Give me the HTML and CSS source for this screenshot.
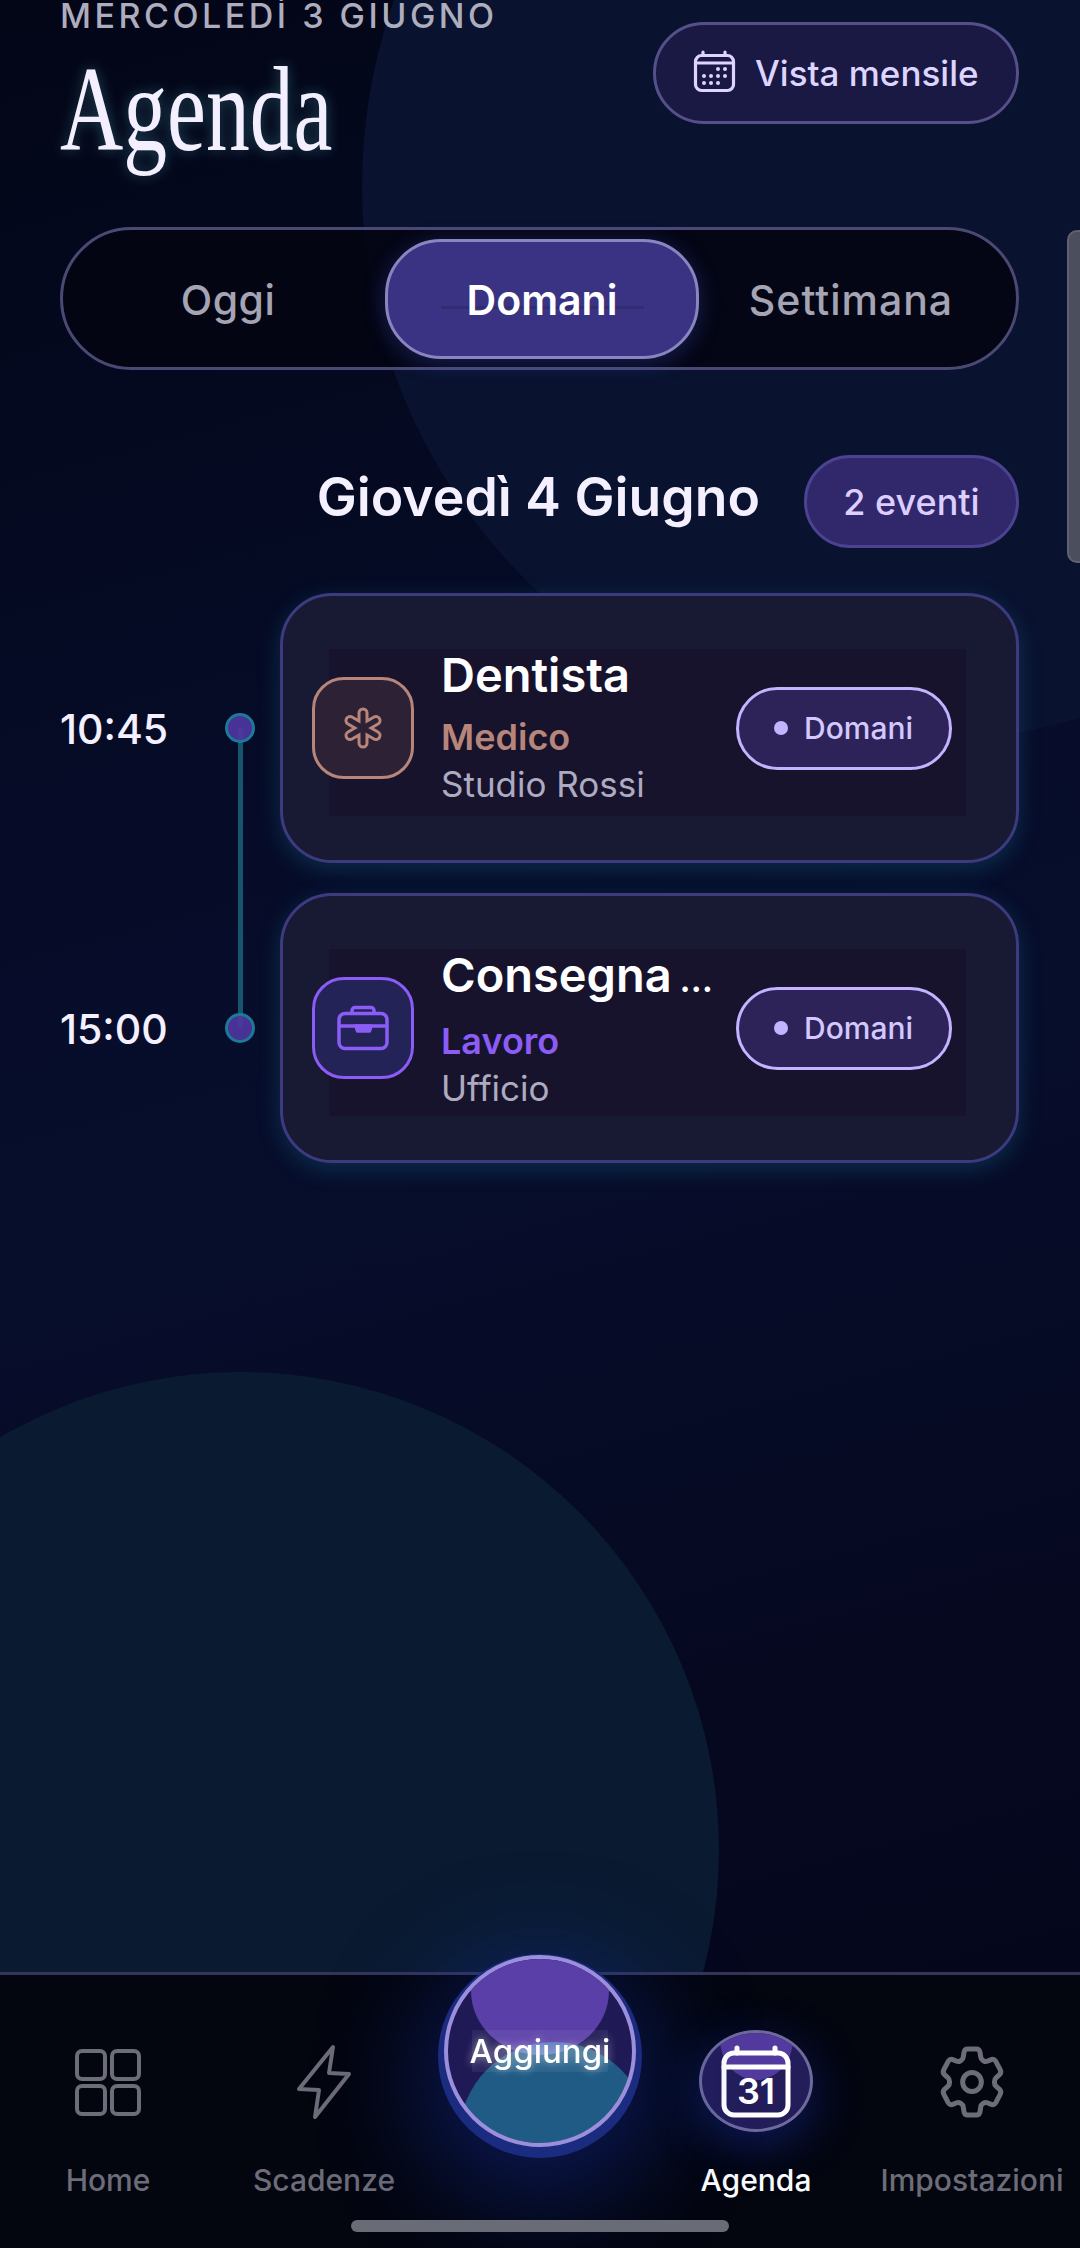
FILE: index.html
```html
<!DOCTYPE html>
<html lang="it">
<head>
    <meta charset="UTF-8">
    <meta name="viewport" content="width=device-width, initial-scale=1.0">
    <title>Agenda</title>
    <link rel="stylesheet" href="styles.css">
</head>
<body>
    <div class="screen">
        <div class="blob blob-top"></div>
        <div class="blob blob-bottom"></div>
        <div class="scrollbar"></div>

        <main class="content">
            <header class="top">
                <div>
                    <div class="eyebrow">MERCOLEDÌ 3 GIUGNO</div>
                    <h1 class="title">Agenda</h1>
                </div>
                <button class="month-btn">
                    <svg class="month-icon" viewBox="0 0 70 70" fill="none" stroke="currentColor" stroke-width="3.2" stroke-linecap="round">
                        <rect x="15.5" y="17.5" width="38" height="35" rx="6"/>
                        <path d="M23 14v3M45 14v3M15.5 25h38"/>
                        <g fill="currentColor" stroke="none">
                            <circle cx="38" cy="31" r="2"/><circle cx="45" cy="31" r="2"/>
                            <circle cx="24" cy="38" r="2"/><circle cx="31" cy="38" r="2"/><circle cx="38" cy="38" r="2"/><circle cx="45" cy="38" r="2"/>
                            <circle cx="24" cy="45" r="2"/><circle cx="31" cy="45" r="2"/><circle cx="38" cy="45" r="2"/>
                        </g>
                    </svg>
                    Vista mensile
                </button>
            </header>

            <div class="segment">
                <div class="seg-item">Oggi</div>
                <div class="seg-item active">Domani</div>
                <div class="seg-item last">Settimana</div>
            </div>

            <div class="day-head">
                <h2>Giovedì 4 Giugno</h2>
                <span class="count">2 eventi</span>
            </div>

            <div class="timeline">
                <div class="row first">
                    <div class="time">10:45</div>
                    <div class="dot"></div>
                    <article class="card">
                        <div class="card-inner">
                            <div class="cat-icon medico">
                                <svg width="48" height="48" viewBox="0 0 48 48" fill="none" stroke-linecap="round">
                                    <g stroke="#b8857a" stroke-width="11">
                                        <path d="M24 9v30M11 16.500l26 15M11 31.500l26-15"/>
                                    </g>
                                    <g stroke="#2c2135" stroke-width="5">
                                        <path d="M24 9v30M11 16.500l26 15M11 31.500l26-15"/>
                                    </g>
                                </svg>
                            </div>
                            <div class="info">
                                <div class="name">Dentista</div>
                                <div class="cat cat-medico">Medico</div>
                                <div class="place">Studio Rossi</div>
                            </div>
                            <div class="tag"><span class="tag-dot"></span>Domani</div>
                        </div>
                    </article>
                </div>

                <div class="row">
                    <div class="time">15:00</div>
                    <div class="dot"></div>
                    <article class="card">
                        <div class="card-inner">
                            <div class="cat-icon lavoro">
                                <svg width="56" height="48" viewBox="0 0 56 48" fill="none" stroke="#8b5cf6" stroke-width="3.500" stroke-linejoin="round">
                                    <rect x="4" y="9.500" width="48" height="35" rx="6"/>
                                    <path d="M17 9V6.500a3 3 0 0 1 3-3h16a3 3 0 0 1 3 3V9M4 22h48"/>
                                    <path d="M21 22h15l-1.500 5h-12z" fill="#8b5cf6"/>
                                </svg>
                            </div>
                            <div class="info">
                                <div class="name name-cut">Consegna <span class="more">…</span></div>
                                <div class="cat cat-lavoro">Lavoro</div>
                                <div class="place">Ufficio</div>
                            </div>
                            <div class="tag"><span class="tag-dot"></span>Domani</div>
                        </div>
                    </article>
                </div>
            </div>
        </main>

        <nav class="nav">
            <div class="nav-item">
                <div class="nav-icon">
                    <svg width="66" height="67" viewBox="0 0 66 67" fill="none" stroke="currentColor" stroke-width="4">
                        <rect x="2" y="2" width="28" height="28" rx="5"/><rect x="37" y="2" width="27" height="28" rx="5"/>
                        <rect x="2" y="37" width="28" height="28" rx="5"/><rect x="37" y="37" width="27" height="28" rx="5"/>
                    </svg>
                </div>
                <span>Home</span>
            </div>
            <div class="nav-item">
                <div class="nav-icon">
                    <svg width="56" height="76" viewBox="0 0 56 76" fill="none" stroke="currentColor" stroke-width="4" stroke-linejoin="round">
                        <path d="M37 3l-4 26 20 1-34 43 4-27-20-1z"/>
                    </svg>
                </div>
                <span>Scadenze</span>
            </div>
            <div class="nav-item"></div>
            <div class="nav-item current">
                <div class="nav-icon">
                    <div class="current-bg"><div class="current-blob"></div></div>
                    <svg class="current-cal" width="74" height="74" viewBox="0 0 74 74" fill="none" stroke="#fff" stroke-width="5" stroke-linecap="round">
                        <rect x="5" y="8" width="64" height="62" rx="10"/>
                        <path d="M18 3v5M56 3v5M5 22h64"/>
                        <text x="37" y="59" class="cal-num">31</text>
                    </svg>
                </div>
                <span>Agenda</span>
            </div>
            <div class="nav-item">
                <div class="nav-icon">
                    <svg width="80" height="88" viewBox="0 0 24 24" preserveAspectRatio="none" fill="none" stroke="currentColor" stroke-linejoin="round">
                        <path vector-effect="non-scaling-stroke" stroke-width="5" d="M9.594 3.940c.090-.542.560-.940 1.110-.940h2.593c.550 0 1.020.398 1.110.940l.213 1.281c.063.374.313.686.645.870.074.040.147.083.220.127.325.196.720.257 1.075.124l1.217-.456a1.125 1.125 0 0 1 1.370.490l1.296 2.247a1.125 1.125 0 0 1-.260 1.431l-1.003.827c-.293.241-.438.613-.430.992a7.723 7.723 0 0 1 0 .255c-.008.378.137.750.430.991l1.004.827c.424.350.534.955.260 1.430l-1.298 2.247a1.125 1.125 0 0 1-1.369.491l-1.217-.456c-.355-.133-.750-.072-1.076.124a6.470 6.470 0 0 1-.220.128c-.331.183-.581.495-.644.869l-.213 1.281c-.090.543-.560.940-1.110.940h-2.594c-.550 0-1.019-.398-1.110-.940l-.213-1.281c-.062-.374-.312-.686-.644-.870a6.520 6.520 0 0 1-.220-.127c-.325-.196-.720-.257-1.076-.124l-1.217.456a1.125 1.125 0 0 1-1.369-.490l-1.297-2.247a1.125 1.125 0 0 1 .260-1.431l1.004-.827c.292-.240.437-.613.430-.991a6.932 6.932 0 0 1 0-.255c.007-.380-.138-.751-.430-.992l-1.004-.827a1.125 1.125 0 0 1-.260-1.430l1.297-2.247a1.125 1.125 0 0 1 1.370-.491l1.216.456c.356.133.751.072 1.076-.124.072-.044.146-.086.220-.128.332-.183.582-.495.644-.869l.214-1.280Z"/>
                        <path vector-effect="non-scaling-stroke" stroke-width="5" d="M14.800 12a2.800 2.600 0 1 1-5.600 0 2.800 2.600 0 0 1 5.600 0Z"/>
                    </svg>
                </div>
                <span>Impostazioni</span>
            </div>

            <button class="fab">
                <span class="fab-blob fab-purple"></span>
                <span class="fab-blob fab-teal"></span>
                <span class="fab-label">Aggiungi</span>
            </button>
            <div class="home-bar"></div>
        </nav>
    </div>
</body>
</html>
```

FILE: styles.css
```css
* {
    box-sizing: border-box;
}

body {
    margin: 0;
    background: #05081f;
    font-family: Inter, "Noto Sans", sans-serif;
    color: #fff;
}

.screen {
    position: relative;
    width: 1080px;
    height: 2248px;
    overflow: hidden;
    display: flex;
    flex-direction: column;
    background: linear-gradient(165deg, #030617 0%, #060c28 35%, #070e2c 50%, #05081f 75%, #04061a 100%);
}

.blob {
    position: absolute;
    border-radius: 50%;
}

.blob-top {
    left: 362px;
    top: -370px;
    width: 1112px;
    height: 1112px;
    background: #09122f;
}

.blob-bottom {
    left: -237px;
    top: 1372px;
    width: 956px;
    height: 956px;
    background: #0a1a30;
}

.scrollbar {
    position: absolute;
    left: 1067px;
    top: 230px;
    width: 24px;
    height: 333px;
    border-radius: 10px;
    background: #4b4e5c;
    border: 2px solid #5f6172;
}

.content {
    position: relative;
    flex: 1;
    padding: 0 61px 0 60px;
}

.top {
    display: flex;
    justify-content: space-between;
    align-items: flex-start;
    height: 227px;
}

.eyebrow {
    font-size: 34px;
    line-height: 32px;
    font-weight: 500;
    letter-spacing: 3.5px;
    color: #aeadbd;
}

.title {
    margin: 16px 0 0;
    font-family: "Liberation Serif", serif;
    font-size: 120px;
    line-height: 124px;
    font-weight: 400;
    color: #f3efff;
    transform: scaleX(0.73);
    transform-origin: left center;
    text-shadow: 0 0 16px rgba(110, 220, 240, 0.32);
}

.month-btn {
    margin-top: 22px;
    width: 366px;
    height: 102px;
    display: flex;
    align-items: center;
    padding: 0 0 0 24px;
    border: 3px solid #56508a;
    border-radius: 51px;
    background: #1a1943;
    color: #ddd5ff;
    font-family: inherit;
    font-size: 35px;
    font-weight: 500;
    white-space: nowrap;
}

.month-icon {
    width: 70px;
    height: 70px;
    margin-right: 5px;
}

.segment {
    display: grid;
    grid-template-columns: repeat(3, 314px);
    align-items: center;
    height: 143px;
    padding-left: 8px;
    border: 3px solid #4b4973;
    border-radius: 72px;
    background: rgba(3, 4, 18, 0.88);
}

.seg-item {
    height: 120px;
    display: flex;
    align-items: center;
    justify-content: center;
    padding-top: 2px;
    border-radius: 56px;
    font-size: 41px;
    font-weight: 500;
    letter-spacing: 0.5px;
    color: #a5a4b4;
}

.seg-item.last {
    margin-right: 10px;
    letter-spacing: 1px;
}

.seg-item.active {
    border: 3px solid #8a85bf;
    background: linear-gradient(#322c70, #322c70) center 64px / 203px 3px no-repeat, #3a3283;
    color: #fff;
    font-weight: 600;
    letter-spacing: 0;
    box-shadow: 0 4px 22px rgba(70, 90, 230, 0.3);
}

.day-head {
    display: flex;
    justify-content: flex-end;
    align-items: center;
    gap: 44px;
    margin-top: 85px;
}

.day-head h2 {
    margin: 0 0 10px;
    font-size: 53.5px;
    line-height: 64px;
    font-weight: 600;
    color: #f4f0ff;
    white-space: nowrap;
}

.count {
    width: 215px;
    height: 93px;
    display: flex;
    align-items: center;
    justify-content: center;
    border: 3px solid #4b4291;
    border-radius: 46px;
    background: #31286c;
    font-size: 36px;
    font-weight: 500;
    color: #dccfff;
}

.timeline {
    display: flex;
    flex-direction: column;
    gap: 30px;
    margin-top: 45px;
}

.row {
    position: relative;
    display: flex;
    align-items: center;
}

.first::after {
    content: "";
    position: absolute;
    left: 178px;
    top: 50%;
    width: 5px;
    height: 300px;
    background: #15566e;
}

.time {
    width: 165px;
    padding-top: 2px;
    font-size: 41px;
    font-weight: 500;
    color: #f4f0ff;
}

.dot {
    position: relative;
    z-index: 1;
    width: 30px;
    height: 30px;
    border: 3px solid #1c7a98;
    border-radius: 50%;
    background: rgba(78, 54, 158, 0.92);
}

.card {
    width: 739px;
    height: 270px;
    margin-left: 25px;
    display: flex;
    align-items: center;
    padding: 9px 50px 0 46px;
    border: 3px solid #3d3a80;
    border-radius: 52px;
    background: #181a33;
    box-shadow: 0 6px 22px rgba(25, 130, 170, 0.28);
}

.card-inner {
    width: 640px;
    height: 167px;
    display: flex;
    align-items: center;
    padding-bottom: 9px;
    background: #17132c;
}

.cat-icon {
    flex: none;
    width: 102px;
    height: 102px;
    margin-left: -17px;
    display: flex;
    align-items: center;
    justify-content: center;
    border: 3px solid;
    border-radius: 32px;
}

.medico {
    border-color: #b8857a;
    background: #2c2135;
}

.lavoro {
    border-color: #8b5cf6;
    background: #242358;
}

.info {
    flex: 1;
    align-self: flex-start;
    padding-left: 27px;
    white-space: nowrap;
}

.name {
    font-size: 47px;
    line-height: 52px;
    font-weight: 600;
}

.name-cut {
    word-spacing: -4px;
}

.more {
    font-size: 35px;
}

.cat {
    margin-top: 13px;
    font-size: 36px;
    line-height: 46px;
    font-weight: 600;
}

.cat-medico {
    color: #b8857a;
}

.cat-lavoro {
    color: #8b5cf6;
}

.place {
    margin-top: 1px;
    font-size: 35px;
    line-height: 46px;
    color: #aeabc0;
}

.tag {
    flex: none;
    width: 216px;
    height: 83px;
    margin-right: 14px;
    display: flex;
    align-items: center;
    gap: 16px;
    padding-left: 35px;
    border: 3px solid #c4b4ff;
    border-radius: 42px;
    background: #2e2358;
    font-size: 30px;
    font-weight: 500;
    color: #d3c8ff;
}

.tag-dot {
    width: 14px;
    height: 14px;
    border-radius: 50%;
    background: #c4b4ff;
}

.nav {
    position: relative;
    height: 276px;
    display: grid;
    grid-template-columns: repeat(5, 216px);
    padding-top: 72px;
    border-top: 3px solid #35355a;
    background: #03050f;
}

.nav-item {
    display: flex;
    flex-direction: column;
    align-items: center;
    font-size: 30px;
    font-weight: 500;
    color: #6d6c79;
}

.nav-item span {
    margin-top: 45px;
    line-height: 36px;
    white-space: nowrap;
}

.nav-icon {
    position: relative;
    height: 70px;
    display: flex;
    align-items: center;
    justify-content: center;
}

.current {
    color: #fff;
}

.current-bg {
    position: absolute;
    left: 50%;
    top: -17px;
    width: 114px;
    height: 102px;
    margin-left: -57px;
    overflow: hidden;
    border: 3px solid #6f6a9c;
    border-radius: 50%;
    background: #231d5a;
    box-shadow: 0 14px 50px rgba(30, 60, 210, 0.4);
}

.current-blob {
    position: absolute;
    left: 18px;
    top: -34px;
    width: 73px;
    height: 81px;
    border-radius: 50%;
    background: #533a9e;
}

.current-cal {
    position: relative;
}

.cal-num {
    fill: #fff;
    stroke: none;
    font-size: 36px;
    font-weight: 600;
    text-anchor: middle;
}

.fab {
    position: absolute;
    left: 444px;
    top: -20px;
    width: 192px;
    height: 192px;
    padding: 0;
    overflow: hidden;
    isolation: isolate;
    border: 4px solid #9b8fdc;
    border-radius: 50%;
    background: #1f1a55;
    color: #fff;
    font-family: inherit;
    box-shadow: 0 5px 0 6px #1b2b80, 0 30px 100px 30px rgba(20, 50, 170, 0.4);
}

.fab-blob {
    position: absolute;
    border-radius: 50%;
}

.fab-purple {
    left: 23px;
    top: -32px;
    width: 138px;
    height: 128px;
    background: #5a3fa8;
}

.fab-teal {
    left: 11px;
    top: 83px;
    width: 190px;
    height: 190px;
    background: #004848;
    mix-blend-mode: screen;
}

.fab-label {
    position: absolute;
    left: 24px;
    top: 71px;
    width: 136px;
    height: 42px;
    display: flex;
    align-items: center;
    justify-content: center;
    background: rgba(255, 255, 255, 0.06);
    font-size: 33px;
    font-weight: 500;
    text-shadow: 0 0 8px rgba(255, 255, 255, 0.55);
}

.home-bar {
    position: absolute;
    left: 351px;
    bottom: 16px;
    width: 378px;
    height: 12px;
    border-radius: 6px;
    background: #696b76;
}
```
